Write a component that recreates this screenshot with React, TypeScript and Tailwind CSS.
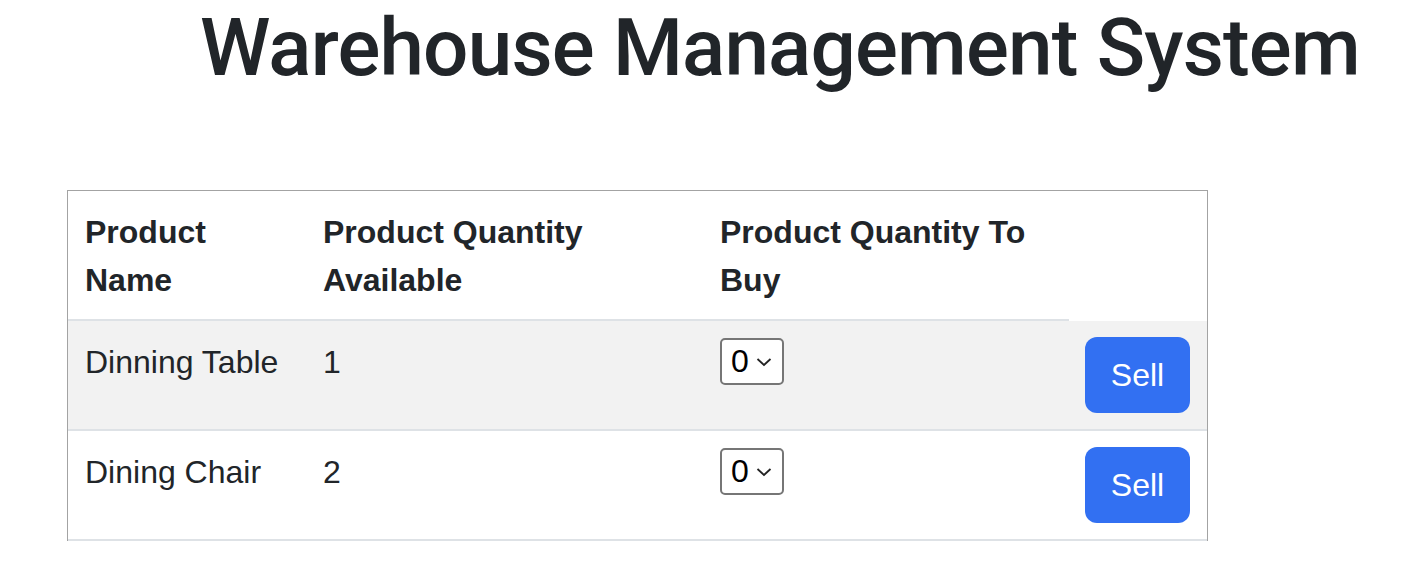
import React from "react";

const products = [
  { name: "Dinning Table", qty: 1 },
  { name: "Dining Chair", qty: 2 },
];

function QtySelect() {
  return (
    <div className="relative inline-flex h-[47px] w-[64px] items-center rounded-[5px] border-2 border-[#767676] bg-white pl-[9px]">
      <span className="text-[32px] leading-none text-black">0</span>
      <svg className="absolute right-[10px] top-[17px]" width="16" height="10" viewBox="0 0 16 10" fill="none">
        <path d="M1.5 2l6.5 6 6.5-6" stroke="#222" strokeWidth="1.8" />
      </svg>
    </div>
  );
}

export default function App() {
  return (
    <div className="min-h-[574px] bg-white font-['Liberation_Sans',Arial,sans-serif] text-[#212529]">
      <h1 className="whitespace-nowrap pl-[200px] font-['Roboto',sans-serif] text-[80px] font-medium leading-[96px] tracking-[-0.8px]">
        Warehouse Management System
      </h1>
      <div className="mt-[94px] pl-[67px]">
        <table className="w-[1141px] table-fixed border-separate border-spacing-0 border-x border-t border-[#a3a3a3] text-[32px] leading-[48px]">
          <colgroup>
            <col className="w-[239px]" />
            <col className="w-[397px]" />
            <col className="w-[365px]" />
            <col />
          </colgroup>
          <thead>
            <tr className="text-left align-bottom">
              <th className="border-b-2 border-[#dee2e6] px-[17px] pb-[15px] pt-[17px] font-bold">
                Product Name
              </th>
              <th className="border-b-2 border-[#dee2e6] px-[16px] pb-[15px] pt-[17px] font-bold">
                Product Quantity Available
              </th>
              <th className="border-b-2 border-[#dee2e6] px-[16px] pb-[15px] pt-[17px] font-bold">
                Product Quantity To Buy
              </th>
            </tr>
          </thead>
          <tbody>
            {products.map((p, i) => (
              <tr key={p.name} className={i % 2 === 0 ? "bg-[#f2f2f2] align-top" : "bg-white align-top"}>
                <td className="whitespace-nowrap border-b-2 border-[#dee2e6] px-[17px] pb-[16px] pt-[17px]">{p.name}</td>
                <td className="border-b-2 border-[#dee2e6] px-[16px] pb-[16px] pt-[17px]">{p.qty}</td>
                <td className="border-b-2 border-[#dee2e6] px-[16px] pb-[16px] pt-[16px]">
                  <QtySelect />
                </td>
                <td className="border-b-2 border-[#dee2e6] px-[16px] pb-[16px] pt-[16px]">
                  <button className="h-[76px] w-[105px] rounded-[12px] bg-[#3270f2] text-[32px] text-white">
                    Sell
                  </button>
                </td>
              </tr>
            ))}
          </tbody>
        </table>
      </div>
    </div>
  );
}
